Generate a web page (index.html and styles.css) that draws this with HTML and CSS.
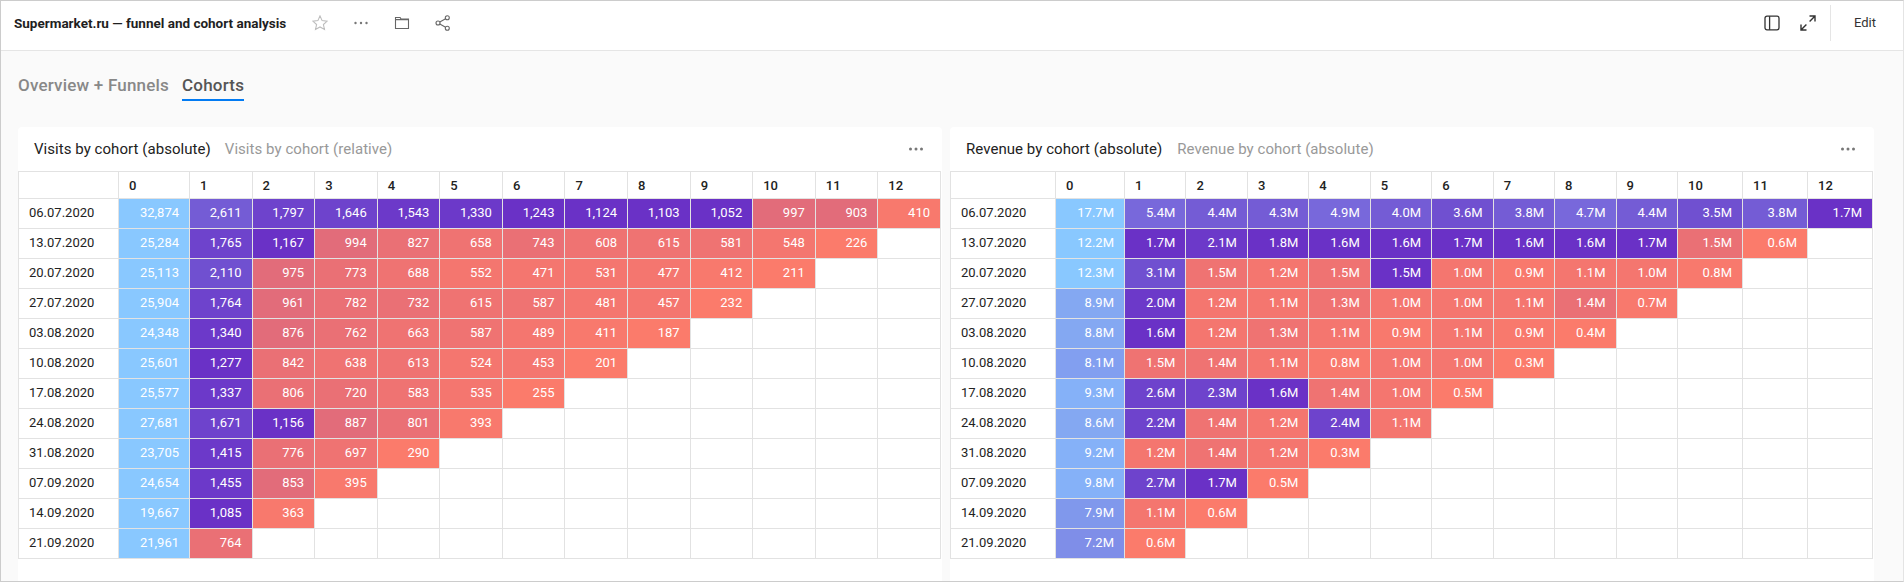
FILE: index.html
```html
<!DOCTYPE html>
<html lang="en">
<head>
    <meta charset="utf-8">
    <title>Supermarket.ru — funnel and cohort analysis</title>
    <link rel="stylesheet" href="styles.css">
</head>
<body>
<div class="window">

    <header class="topbar">
        <h1 class="title">Supermarket.ru — funnel and cohort analysis</h1>
        <div class="title-actions">
            <span class="icon-btn">
                <svg width="16" height="16" viewBox="0 0 16 16" fill="none" stroke="#bdbdbd" stroke-width="1.1"><path d="M8 .9l2.1 4.7 5.1.5-3.8 3.4 1.1 5-4.5-2.6-4.5 2.6 1.1-5L.8 6.1l5.1-.5z"/></svg>
            </span>
            <span class="icon-btn">
                <svg width="16" height="16" viewBox="0 0 16 16" fill="#777"><circle cx="2.5" cy="8" r="1.2"/><circle cx="8" cy="8" r="1.2"/><circle cx="13.5" cy="8" r="1.2"/></svg>
            </span>
            <span class="icon-btn">
                <svg width="16" height="16" viewBox="0 0 16 16" fill="none" stroke="#666" stroke-width="1.1"><path d="M1.5 13.5v-11h4.6l1 1.6h7.4v9.4zM1.5 4.6h13"/></svg>
            </span>
            <span class="icon-btn">
                <svg width="16" height="16" viewBox="0 0 16 16" fill="none" stroke="#666" stroke-width="1.1"><circle cx="12.3" cy="2.8" r="2"/><circle cx="12.3" cy="13.2" r="2"/><circle cx="3" cy="8" r="2"/><path d="M4.8 7l5.8-3.2M4.8 9l5.8 3.2"/></svg>
            </span>
        </div>
        <div class="view-actions">
            <span class="icon-btn view-btn">
                <svg width="16" height="16" viewBox="0 0 16 16" fill="none" stroke="#333" stroke-width="1.3"><rect x="1" y="1.2" width="14" height="13.6" rx="2"/><path d="M5.6 1.2v13.6"/></svg>
            </span>
            <span class="icon-btn view-btn">
                <svg width="16" height="16" viewBox="0 0 16 16" fill="none" stroke="#333" stroke-width="1.4"><path d="M9.5 1h5.5v5.5M15 1L9.6 6.4M6.5 15H1V9.5M1 15l5.4-5.4"/></svg>
            </span>
            <span class="edit">Edit</span>
        </div>
    </header>

    <main class="content">
        <nav class="tabs">
            <span class="tab">Overview + Funnels</span>
            <span class="tab tab-active">Cohorts</span>
        </nav>

        <div class="panels">

            <section class="panel panel-visits">
                <div class="panel-head">
                    <span class="panel-tab panel-tab-active">Visits by cohort (absolute)</span>
                    <span class="panel-tab">Visits by cohort (relative)</span>
                    <svg class="panel-menu" width="16" height="16" viewBox="0 0 16 16" fill="#777"><circle cx="2.5" cy="8" r="1.5"/><circle cx="8" cy="8" r="1.5"/><circle cx="13.5" cy="8" r="1.5"/></svg>
                </div>
                <table class="cohort">
                    <colgroup><col class="col-date"><col class="col-first"><col><col><col><col><col><col><col><col><col><col><col><col></colgroup>
                    <thead>
                        <tr><th></th><th>0</th><th>1</th><th>2</th><th>3</th><th>4</th><th>5</th><th>6</th><th>7</th><th>8</th><th>9</th><th>10</th><th>11</th><th>12</th></tr>
                    </thead>
                    <tbody>
                        <tr><td class="date">06.07.2020</td><td class="b5">32,874</td><td class="p4">2,611</td><td class="p2">1,797</td><td class="p2">1,646</td><td class="p1">1,543</td><td class="p1">1,330</td><td class="p0">1,243</td><td class="p0">1,124</td><td class="p0">1,103</td><td class="p0">1,052</td><td class="r5">997</td><td class="r5">903</td><td class="r1">410</td></tr>
                        <tr><td class="date">13.07.2020</td><td class="b5">25,284</td><td class="p2">1,765</td><td class="p0">1,167</td><td class="r5">994</td><td class="r4">827</td><td class="r3">658</td><td class="r4">743</td><td class="r3">608</td><td class="r3">615</td><td class="r3">581</td><td class="r2">548</td><td class="r0">226</td><td></td></tr>
                        <tr><td class="date">20.07.2020</td><td class="b5">25,113</td><td class="p3">2,110</td><td class="r5">975</td><td class="r4">773</td><td class="r3">688</td><td class="r2">552</td><td class="r2">471</td><td class="r2">531</td><td class="r2">477</td><td class="r1">412</td><td class="r0">211</td><td></td><td></td></tr>
                        <tr><td class="date">27.07.2020</td><td class="b5">25,904</td><td class="p2">1,764</td><td class="r5">961</td><td class="r4">782</td><td class="r4">732</td><td class="r3">615</td><td class="r3">587</td><td class="r2">481</td><td class="r2">457</td><td class="r0">232</td><td></td><td></td><td></td></tr>
                        <tr><td class="date">03.08.2020</td><td class="b5">24,348</td><td class="p1">1,340</td><td class="r5">876</td><td class="r4">762</td><td class="r3">663</td><td class="r3">587</td><td class="r2">489</td><td class="r1">411</td><td class="r0">187</td><td></td><td></td><td></td><td></td></tr>
                        <tr><td class="date">10.08.2020</td><td class="b5">25,601</td><td class="p0">1,277</td><td class="r4">842</td><td class="r3">638</td><td class="r3">613</td><td class="r2">524</td><td class="r2">453</td><td class="r0">201</td><td></td><td></td><td></td><td></td><td></td></tr>
                        <tr><td class="date">17.08.2020</td><td class="b5">25,577</td><td class="p1">1,337</td><td class="r4">806</td><td class="r4">720</td><td class="r3">583</td><td class="r2">535</td><td class="r0">255</td><td></td><td></td><td></td><td></td><td></td><td></td></tr>
                        <tr><td class="date">24.08.2020</td><td class="b5">27,681</td><td class="p2">1,671</td><td class="p0">1,156</td><td class="r5">887</td><td class="r4">801</td><td class="r1">393</td><td></td><td></td><td></td><td></td><td></td><td></td><td></td></tr>
                        <tr><td class="date">31.08.2020</td><td class="b5">23,705</td><td class="p1">1,415</td><td class="r4">776</td><td class="r3">697</td><td class="r0">290</td><td></td><td></td><td></td><td></td><td></td><td></td><td></td><td></td></tr>
                        <tr><td class="date">07.09.2020</td><td class="b5">24,654</td><td class="p1">1,455</td><td class="r5">853</td><td class="r1">395</td><td></td><td></td><td></td><td></td><td></td><td></td><td></td><td></td><td></td></tr>
                        <tr><td class="date">14.09.2020</td><td class="b5">19,667</td><td class="p0">1,085</td><td class="r1">363</td><td></td><td></td><td></td><td></td><td></td><td></td><td></td><td></td><td></td><td></td></tr>
                        <tr><td class="date">21.09.2020</td><td class="b5">21,961</td><td class="r4">764</td><td></td><td></td><td></td><td></td><td></td><td></td><td></td><td></td><td></td><td></td><td></td></tr>
                    </tbody>
                </table>
            </section>

            <section class="panel panel-revenue">
                <div class="panel-head">
                    <span class="panel-tab panel-tab-active">Revenue by cohort (absolute)</span>
                    <span class="panel-tab">Revenue by cohort (absolute)</span>
                    <svg class="panel-menu" width="16" height="16" viewBox="0 0 16 16" fill="#777"><circle cx="2.5" cy="8" r="1.5"/><circle cx="8" cy="8" r="1.5"/><circle cx="13.5" cy="8" r="1.5"/></svg>
                </div>
                <table class="cohort">
                    <colgroup><col class="col-date"><col class="col-first"><col><col><col><col><col><col><col><col><col><col class="col-wide"><col class="col-wide"><col class="col-wide"></colgroup>
                    <thead>
                        <tr><th></th><th>0</th><th>1</th><th>2</th><th>3</th><th>4</th><th>5</th><th>6</th><th>7</th><th>8</th><th>9</th><th>10</th><th>11</th><th>12</th></tr>
                    </thead>
                    <tbody>
                        <tr><td class="date">06.07.2020</td><td class="b5">17.7M</td><td class="p5">5.4M</td><td class="p4">4.4M</td><td class="p4">4.3M</td><td class="p5">4.9M</td><td class="p4">4.0M</td><td class="p3">3.6M</td><td class="p4">3.8M</td><td class="p5">4.7M</td><td class="p4">4.4M</td><td class="p3">3.5M</td><td class="p4">3.8M</td><td class="p0">1.7M</td></tr>
                        <tr><td class="date">13.07.2020</td><td class="b5">12.2M</td><td class="p0">1.7M</td><td class="p1">2.1M</td><td class="p0">1.8M</td><td class="p0">1.6M</td><td class="p0">1.6M</td><td class="p0">1.7M</td><td class="p0">1.6M</td><td class="p0">1.6M</td><td class="p0">1.7M</td><td class="r4">1.5M</td><td class="r0">0.6M</td><td></td></tr>
                        <tr><td class="date">20.07.2020</td><td class="b5">12.3M</td><td class="p3">3.1M</td><td class="r3">1.5M</td><td class="r2">1.2M</td><td class="r3">1.5M</td><td class="p0">1.5M</td><td class="r2">1.0M</td><td class="r1">0.9M</td><td class="r2">1.1M</td><td class="r2">1.0M</td><td class="r1">0.8M</td><td></td><td></td></tr>
                        <tr><td class="date">27.07.2020</td><td class="b3">8.9M</td><td class="p1">2.0M</td><td class="r2">1.2M</td><td class="r2">1.1M</td><td class="r3">1.3M</td><td class="r2">1.0M</td><td class="r2">1.0M</td><td class="r2">1.1M</td><td class="r4">1.4M</td><td class="r1">0.7M</td><td></td><td></td><td></td></tr>
                        <tr><td class="date">03.08.2020</td><td class="b3">8.8M</td><td class="p0">1.6M</td><td class="r2">1.2M</td><td class="r3">1.3M</td><td class="r2">1.1M</td><td class="r1">0.9M</td><td class="r2">1.1M</td><td class="r1">0.9M</td><td class="r0">0.4M</td><td></td><td></td><td></td><td></td></tr>
                        <tr><td class="date">10.08.2020</td><td class="b2">8.1M</td><td class="r3">1.5M</td><td class="r3">1.4M</td><td class="r2">1.1M</td><td class="r1">0.8M</td><td class="r2">1.0M</td><td class="r2">1.0M</td><td class="r0">0.3M</td><td></td><td></td><td></td><td></td><td></td></tr>
                        <tr><td class="date">17.08.2020</td><td class="b4">9.3M</td><td class="p2">2.6M</td><td class="p2">2.3M</td><td class="p0">1.6M</td><td class="r3">1.4M</td><td class="r2">1.0M</td><td class="r0">0.5M</td><td></td><td></td><td></td><td></td><td></td><td></td></tr>
                        <tr><td class="date">24.08.2020</td><td class="b3">8.6M</td><td class="p2">2.2M</td><td class="r3">1.4M</td><td class="r2">1.2M</td><td class="p2">2.4M</td><td class="r2">1.1M</td><td></td><td></td><td></td><td></td><td></td><td></td><td></td></tr>
                        <tr><td class="date">31.08.2020</td><td class="b4">9.2M</td><td class="r2">1.2M</td><td class="r3">1.4M</td><td class="r2">1.2M</td><td class="r0">0.3M</td><td></td><td></td><td></td><td></td><td></td><td></td><td></td><td></td></tr>
                        <tr><td class="date">07.09.2020</td><td class="b4">9.8M</td><td class="p2">2.7M</td><td class="p0">1.7M</td><td class="r0">0.5M</td><td></td><td></td><td></td><td></td><td></td><td></td><td></td><td></td><td></td></tr>
                        <tr><td class="date">14.09.2020</td><td class="b1">7.9M</td><td class="r2">1.1M</td><td class="r0">0.6M</td><td></td><td></td><td></td><td></td><td></td><td></td><td></td><td></td><td></td><td></td></tr>
                        <tr><td class="date">21.09.2020</td><td class="b0">7.2M</td><td class="r0">0.6M</td><td></td><td></td><td></td><td></td><td></td><td></td><td></td><td></td><td></td><td></td><td></td></tr>
                    </tbody>
                </table>
            </section>

        </div>
    </main>

</div>
</body>
</html>
```

FILE: styles.css
```css
* {
    box-sizing: border-box;
}
body {
    margin: 0;
    font-family: Roboto, "Open Sans", sans-serif;
    color: #222;
}
.window {
    height: 582px;
    display: flex;
    flex-direction: column;
    overflow: hidden;
    background-color: #fafafa;
    border: 1px solid #ccc;
    border-right-color: #e4e4e4;
}

/* top bar */
.topbar {
    height: 50px;
    flex: none;
    display: flex;
    align-items: center;
    padding: 0 0 5px 13px;
    background-color: #fff;
    border-bottom: 1px solid #e5e5e5;
}
.title {
    margin: 0;
    font-size: 13.5px;
    font-weight: 700;
    color: #1f1f1f;
}
.title-actions {
    display: flex;
    margin-left: 13px;
}
.icon-btn {
    width: 41px;
    height: 32px;
    display: flex;
    align-items: center;
    justify-content: center;
}
.view-actions {
    display: flex;
    align-items: center;
    margin-left: auto;
}
.view-btn {
    width: 36px;
}
.edit {
    height: 36px;
    line-height: 36px;
    margin-left: 4px;
    padding: 0 27px 0 23px;
    font-size: 13px;
    color: #333;
    border-left: 1px solid #e5e5e5;
}

/* tabs */
.content {
    flex: 1;
    padding: 0 29px 0 17px;
}
.tabs {
    display: flex;
    gap: 13px;
    height: 76px;
    padding-top: 23px;
}
.tab {
    height: 27px;
    line-height: 22px;
    font-size: 17px;
    font-weight: 500;
    letter-spacing: 0.2px;
    color: #888;
}
.tab-active {
    color: #555;
    border-bottom: 2px solid #027bf3;
}

/* panels */
.panels {
    display: grid;
    grid-template-columns: 1fr 1fr;
    gap: 8px;
}
.panel {
    height: 454px;
    background-color: #fff;
    border-radius: 4px 4px 0 0;
}
.panel-head {
    height: 44px;
    display: flex;
    align-items: center;
    gap: 14px;
    padding: 0 18px 0 16px;
    font-size: 15px;
    letter-spacing: 0.05px;
}
.panel-revenue .panel-head {
    gap: 15px;
}
.panel-tab {
    color: #999;
}
.panel-tab-active {
    color: #222;
}
.panel-menu {
    margin-left: auto;
}

/* cohort table */
.cohort {
    width: 923px;
    table-layout: fixed;
    border-collapse: collapse;
    font-size: 13px;
}
.col-date {
    width: 100px;
}
.col-first {
    width: 71px;
}
.panel-revenue .col-date {
    width: 105px;
}
.panel-revenue .col-first {
    width: 69px;
}
.col-wide {
    width: 65px;
}
.cohort th,
.cohort td {
    height: 30px;
    padding: 0 10px;
    border: 1px solid #e2e2e2;
    white-space: nowrap;
}
.cohort th {
    height: 27px;
    text-align: left;
    font-weight: 500;
    color: #222;
}
.cohort td {
    padding-bottom: 2px;
    text-align: right;
    color: #fff;
}
.cohort .date {
    text-align: left;
    color: #222;
}

/* heat colours, low to high */
.r0 { background-color: #fb7b6b; }
.r1 { background-color: #f8796d; }
.r2 { background-color: #f4766f; }
.r3 { background-color: #ef7372; }
.r4 { background-color: #ea7075; }
.r5 { background-color: #e26c7a; }
.p0 { background-color: #6a31c6; }
.p1 { background-color: #6c39c9; }
.p2 { background-color: #6e43cc; }
.p3 { background-color: #7050d0; }
.p4 { background-color: #745cd5; }
.p5 { background-color: #7868db; }
.b0 { background-color: #7f8ee8; }
.b1 { background-color: #8098ec; }
.b2 { background-color: #829ff0; }
.b3 { background-color: #84a8f2; }
.b4 { background-color: #85b1f8; }
.b5 { background-color: #89c8ff; }
```
